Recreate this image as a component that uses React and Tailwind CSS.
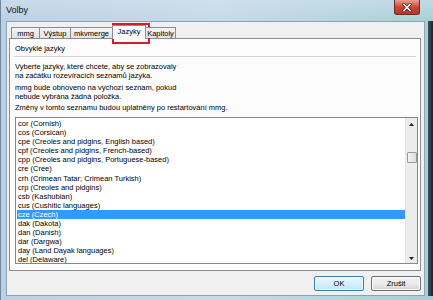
const items = [
  "cor (Cornish)",
  "cos (Corsican)",
  "cpe (Creoles and pidgins, English based)",
  "cpf (Creoles and pidgins, French-based)",
  "cpp (Creoles and pidgins, Portuguese-based)",
  "cre (Cree)",
  "crh (Crimean Tatar; Crimean Turkish)",
  "crp (Creoles and pidgins)",
  "csb (Kashubian)",
  "cus (Cushitic languages)",
  "cze (Czech)",
  "dak (Dakota)",
  "dan (Danish)",
  "dar (Dargwa)",
  "day (Land Dayak languages)",
  "del (Delaware)",
];

const tabs = [
  { label: "mmg", w: "w-[29px]" },
  { label: "Výstup", w: "w-[32px]" },
  { label: "mkvmerge", w: "w-[43px]" },
  { label: "Jazyky", w: "w-[34px]", active: true },
  { label: "Kapitoly", w: "w-[31px]" },
];

export default function App() {
  return (
    <div
      className="w-[433px] h-[300px] overflow-hidden relative flex flex-col bg-gradient-to-r from-[#bad0e5] via-[#c8dae9] to-[#a6d0d3] border-l border-[#71879c] text-black"
      style={{ fontFamily: '"Liberation Sans", Arial, sans-serif' }}
    >
      {/* title bar */}
      <div className="h-[21px] flex items-start shrink-0 bg-gradient-to-b from-[#d2e2ef]/60 to-transparent">
        <span className="ml-[5px] mt-[5px] text-[9px] leading-[11px] text-[#111]">Volby</span>
        <div className="ml-auto mr-[13px] w-[26px] h-[15px] rounded-b-[3px] border border-t-0 border-[#6e2a26] bg-gradient-to-b from-[#e7a08f] via-[#c8473a] to-[#b8372a] flex items-center justify-center">
          <svg width="10" height="9" viewBox="0 0 10 9">
            <path d="M2 1.5 L8 7.5 M8 1.5 L2 7.5" stroke="#4a1410" strokeWidth="3" strokeLinecap="square" />
            <path d="M2 1.5 L8 7.5 M8 1.5 L2 7.5" stroke="#ffffff" strokeWidth="1.6" strokeLinecap="square" />
          </svg>
        </div>
      </div>

      <div className="flex flex-1 min-h-0">
        <div className="w-[5px] shrink-0" />
        {/* client area */}
        <div className="w-[419px] shrink-0 border border-[#8ea2b6] bg-[#f0f0f0] flex flex-col">
          {/* tab strip */}
          <div className="mt-[3px] h-[13px] flex items-end pl-[4px] relative z-10">
            {tabs.map((t) =>
              t.active ? (
                <div
                  key={t.label}
                  className={`${t.w} h-[14px] -mb-[1px] -ml-[1px] bg-[#fcfcfc] border border-b-0 border-[#898c95] text-[7.5px] leading-[12px] text-center`}
                >
                  {t.label}
                </div>
              ) : (
                <div
                  key={t.label}
                  className={`${t.w} h-[11px] bg-gradient-to-b from-[#f4f4f4] to-[#e2e2e2] border border-b-0 border-[#898c95] -ml-[1px] first:ml-0 text-[7.5px] leading-[11px] text-center`}
                >
                  {t.label}
                </div>
              )
            )}
          </div>
          {/* tab panel */}
          <div className="ml-[2px] w-[412px] h-[233px] border border-[#898c95] bg-[#fcfcfc] flex flex-col text-[7.5px] leading-[9px]">
            <div className="pl-[5px] pt-[5px]">Obvyklé jazyky</div>
            <div className="ml-[4px] mr-[4px] mt-[3px] h-[1px] bg-[#d5d5d5]" />
            <div className="pl-[5px] mt-[5px]">
              <div>Vyberte jazyky, které chcete, aby se zobrazovaly</div>
              <div>na začátku rozevíracích seznamů jazyka.</div>
            </div>
            <div className="pl-[5px] mt-[3px]">
              <div>mmg bude obnoveno na výchozí seznam, pokud</div>
              <div>nebude vybrána žádná položka.</div>
            </div>
            <div className="pl-[5px] mt-[2px]">Změny v tomto seznamu budou uplatněny po restartování mmg.</div>
            {/* list box */}
            <div className="ml-[5px] mt-[5px] w-[403px] h-[147px] border border-[#828790] bg-white flex overflow-hidden">
              <div className="flex-1 pt-[1px] pl-[1px] overflow-hidden">
                {items.map((it) => (
                  <div
                    key={it}
                    className={`h-[9.1px] leading-[9.1px] pl-[1px] whitespace-nowrap ${
                      it.startsWith("cze") ? "bg-[#3399ff] text-white" : ""
                    }`}
                  >
                    {it}
                  </div>
                ))}
              </div>
              {/* scrollbar */}
              <div className="w-[12px] h-full bg-[#ececec] border-l border-[#e3e3e3] flex flex-col items-center">
                <div className="h-[13px] flex items-center justify-center">
                  <svg width="5" height="3" viewBox="0 0 5 3">
                    <path d="M0 3 L2.5 0 L5 3 Z" fill="#222" />
                  </svg>
                </div>
                <div className="mt-[21px] w-[10px] h-[11px] rounded-[1px] border border-[#9b9b9b] bg-gradient-to-r from-[#f3f3f3] to-[#dcdcdc]" />
                <div className="flex-1" />
                <div className="h-[10px] flex items-center justify-center">
                  <svg width="5" height="3" viewBox="0 0 5 3">
                    <path d="M0 0 L5 0 L2.5 3 Z" fill="#222" />
                  </svg>
                </div>
              </div>
            </div>
          </div>
          {/* buttons */}
          <div className="flex justify-end gap-[7px] pr-[3px] mt-[5px]">
            <div className="w-[50px] h-[15px] rounded-[2px] border border-[#3c7fb1] bg-gradient-to-b from-[#eaf6fd] via-[#d9f0fc] to-[#bee6fd] text-[7.5px] leading-[13px] text-center shadow-[inset_0_0_0_1px_#e8f6ff]">
              OK
            </div>
            <div className="w-[50px] h-[15px] rounded-[2px] border border-[#707070] bg-gradient-to-b from-[#f2f2f2] via-[#ebebeb] to-[#d6d6d6] text-[7.5px] leading-[13px] text-center shadow-[inset_0_0_0_1px_#fbfbfb]">
              Zrušit
            </div>
          </div>
        </div>
        <div className="w-[3px] shrink-0" />
        <div className="flex-1 bg-gradient-to-r from-[#3e5466] to-[#1a2430]" />
      </div>
      <div className="h-[4px] shrink-0" />

      {/* red highlight annotation */}
      <div className="absolute left-[111px] top-[23px] w-[38px] h-[21px] border-2 border-[#d11f2c]" />
    </div>
  );
}
